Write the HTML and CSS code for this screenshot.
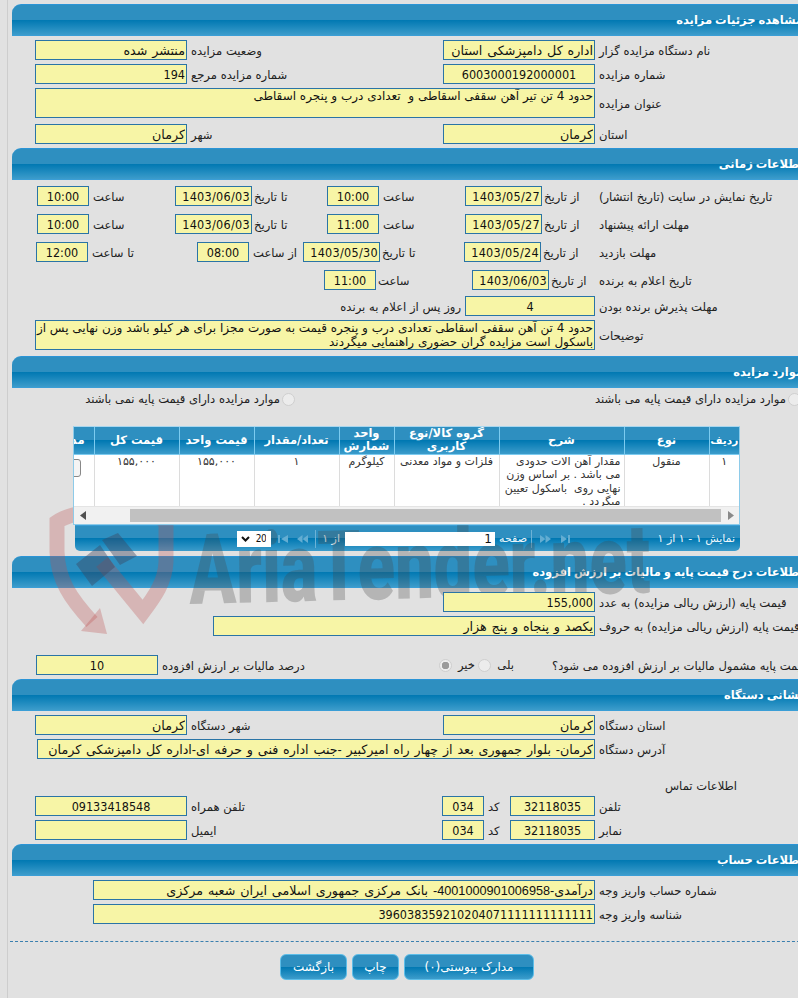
FILE: index.html
```html
<!DOCTYPE html>
<html lang="fa" dir="rtl">
<head>
<meta charset="utf-8">
<title>مشاهده جزئیات مزایده</title>
<link rel="stylesheet" href="styles.css">
</head>
<body>
<div class="sheet">
  <div class="rail">
    <div class="main">

      <section class="sec">
        <h2 class="bar">مشاهده جزئیات مزایده</h2>
        <div class="body b1">
          <div class="row"><span class="l w215">نام دستگاه مزایده گزار</span><input class="f w152" readonly value="اداره کل دامپزشکی استان"><span class="l w256">وضعیت مزایده</span><input class="f w152" readonly value="منتشر شده"></div>
          <div class="row"><span class="l w215">شماره مزایده</span><input class="f n w152 c" readonly value="6003000192000001"><span class="l w256">شماره مزایده مرجع</span><input class="f n w152" readonly value="194"></div>
          <div class="row mid"><span class="l w215">عنوان مزایده</span><textarea class="f ta w560" readonly>حدود 4 تن تیر آهن سقفی اسقاطی و  تعدادی درب و پنجره اسقاطی</textarea></div>
          <div class="row mt2"><span class="l w215">استان</span><input class="f w152" readonly value="کرمان"><span class="l w256">شهر</span><input class="f w152" readonly value="کرمان"></div>
        </div>
      </section>

      <section class="sec">
        <h2 class="bar">اطلاعات زمانی</h2>
        <div class="body b2">
          <div class="row"><span class="l z w211">تاریخ نمایش در سایت (تاریخ انتشار)</span><span class="l t w57">از تاریخ</span><input class="f n w77" readonly value="1403/05/27"><span class="l w86">ساعت</span><input class="f n w52 c" readonly value="10:00"><span class="l t w75">تا تاریخ</span><input class="f n w77" readonly value="1403/06/03"><span class="l w86">ساعت</span><input class="f n w52 c" readonly value="10:00"></div>
          <div class="row"><span class="l z w211">مهلت ارائه پیشنهاد</span><span class="l t w57">از تاریخ</span><input class="f n w77" readonly value="1403/05/27"><span class="l w86">ساعت</span><input class="f n w52 c" readonly value="11:00"><span class="l t w75">تا تاریخ</span><input class="f n w77" readonly value="1403/06/03"><span class="l w86">ساعت</span><input class="f n w52 c" readonly value="10:00"></div>
          <div class="row"><span class="l z w211">مهلت بازدید</span><span class="l t w58">از تاریخ</span><input class="f n w77" readonly value="1403/05/24"><span class="l t w84">تا تاریخ</span><input class="f n w77" readonly value="1403/05/30"><span class="l w54">از ساعت</span><input class="f n w52 c" readonly value="08:00"><span class="l w109">تا ساعت</span><input class="f n w52 c" readonly value="12:00"></div>
          <div class="row"><span class="l z w211">تاریخ اعلام به برنده</span><span class="l t w50">از تاریخ</span><input class="f n w77" readonly value="1403/06/03"><span class="l t w96">ساعت</span><input class="f n w52 c" readonly value="11:00"></div>
          <div class="row less2"><span class="l w215">مهلت پذیرش برنده بودن</span><input class="f n w130 c" readonly value="4"><span class="l wauto">روز پس از اعلام به برنده</span></div>
          <div class="row mid less4"><span class="l w215">توضیحات</span><textarea class="f ta tall w560" readonly wrap="off">حدود 4 تن آهن سقفی اسقاطی تعدادی درب و پنجره قیمت به صورت مجزا برای هر کیلو باشد وزن نهایی پس از
باسکول است مزایده گران حضوری راهنمایی میگردند</textarea></div>
        </div>
      </section>

      <section class="sec">
        <h2 class="bar">موارد مزایده</h2>
        <div class="radios">
          <label class="rad rad1"><input class="dot" type="radio" name="base" disabled><span>موارد مزایده دارای قیمت پایه می باشند</span></label>
          <label class="rad"><input class="dot" type="radio" name="base" disabled><span>موارد مزایده دارای قیمت پایه نمی باشند</span></label>
        </div>
        <div class="grid">
          <div class="grid-clip">
            <table class="tbl">
              <colgroup><col class="c1"><col class="c2"><col class="c3"><col class="c4"><col class="c5"><col class="c6"><col class="c7"><col class="c8"><col class="c9"></colgroup>
              <thead>
                <tr><th>ردیف</th><th>نوع</th><th>شرح</th><th>گروه کالا/نوع کاربری</th><th>واحد شمارش</th><th>تعداد/مقدار</th><th>قیمت واحد</th><th>قیمت کل</th><th>مدارک</th></tr>
              </thead>
              <tbody>
                <tr><td>۱</td><td>منقول</td><td class="desc">مقدار آهن الات حدودی<br>می باشد . بر اساس وزن<br>نهایی روی&nbsp; باسکول تعیین<br>میگردد .</td><td>فلزات و مواد معدنی</td><td>کیلوگرم</td><td>۱</td><td>۱۵۵,۰۰۰</td><td>۱۵۵,۰۰۰</td><td class="btn-cell"><button class="mini" type="button">جزئیات</button></td></tr>
              </tbody>
            </table>
          </div>
          <div class="scroll">
            <svg class="arrow" width="6" height="9" viewBox="0 0 6 9"><path d="M0 0l6 4.500L0 9z" fill="#8a8a8a"/></svg>
            <span class="thumb"></span>
            <svg class="arrow far" width="6" height="9" viewBox="0 0 6 9"><path d="M6 0L0 4.500 6 9z" fill="#505050"/></svg>
          </div>
        </div>
        <div class="pager">
          <span class="pg-info">نمایش ۱ - ۱ از ۱</span>
          <svg class="ico i1" width="9" height="8" viewBox="0 0 9 8"><path d="M0 0l6 4-6 4zM7 0h2v8H7z"/></svg>
          <svg class="ico i2" width="11" height="8" viewBox="0 0 11 8"><path d="M0 0l5.500 4L0 8zM5.500 0L11 4 5.500 8z"/></svg>
          <span class="sep s1"></span>
          <span class="pg-t1">صفحه</span>
          <input class="pg-in" value="1" readonly>
          <span class="pg-t2">از ۱</span>
          <span class="sep s2"></span>
          <svg class="ico i3" width="11" height="8" viewBox="0 0 11 8"><path d="M11 0L5.500 4 11 8zM5.500 0L0 4 5.500 8z"/></svg>
          <svg class="ico i4" width="10" height="8" viewBox="0 0 10 8"><path d="M10 0L3 4l7 4zM0 0h2v8H0z"/></svg>
          <span class="sel-wrap">
            <select class="pg-sel"><option>20</option></select>
            <svg class="chev" width="9" height="6" viewBox="0 0 9 6"><path d="M1 1l3.500 3.500L8 1" fill="none" stroke="#111" stroke-width="2"/></svg>
          </span>
        </div>
      </section>

      <section class="sec s4">
        <h2 class="bar">اطلاعات درج قیمت پایه و مالیات بر ارزش افزوده</h2>
        <div class="body b1">
          <div class="row"><span class="l w215">قیمت پایه (ارزش ریالی مزایده) به عدد</span><input class="f n w152" readonly value="155,000"></div>
          <div class="row"><span class="l w215">قیمت پایه (ارزش ریالی مزایده) به حروف</span><input class="f w382" readonly value="یکصد و پنجاه و پنج هزار"></div>
          <div class="row vat">
            <span class="l w262">قیمت پایه مشمول مالیات بر ارزش افزوده می شود؟</span>
            <label class="rad yes"><span>بلی</span><input class="dot" type="radio" name="vat" disabled></label>
            <label class="rad no"><span>خیر</span><input class="dot" type="radio" name="vat" disabled checked></label>
            <span class="l vat-l">درصد مالیات بر ارزش افزوده</span>
            <input class="f n w122 c" readonly value="10">
          </div>
        </div>
      </section>

      <section class="sec">
        <h2 class="bar">نشانی دستگاه</h2>
        <div class="body b1">
          <div class="row"><span class="l w215">استان دستگاه</span><input class="f w152" readonly value="کرمان"><span class="l w256">شهر دستگاه</span><input class="f w152" readonly value="کرمان"></div>
          <div class="row"><span class="l w215">آدرس دستگاه</span><input class="f w558" readonly value="کرمان- بلوار جمهوری بعد از چهار راه امیرکبیر -جنب اداره فنی و حرفه ای-اداره کل دامپزشکی کرمان"></div>
          <div class="contact">اطلاعات تماس</div>
          <div class="row nogap"><span class="l w215">تلفن</span><input class="f n w85 c" readonly value="32118035"><span class="l w26">کد</span><input class="f n w42 c" readonly value="034"><span class="l w255">تلفن همراه</span><input class="f n w152 c" readonly value="09133418548"></div>
          <div class="row"><span class="l w215">نمابر</span><input class="f n w85 c" readonly value="32118035"><span class="l w26">کد</span><input class="f n w42 c" readonly value="034"><span class="l w255">ایمیل</span><input class="f w152" readonly value=""></div>
        </div>
      </section>

      <section class="sec">
        <h2 class="bar">اطلاعات حساب</h2>
        <div class="body b1 last">
          <div class="row"><span class="l w215">شماره حساب واریز وجه</span><input class="f w502" readonly value="درآمدی-4001000901006958- بانک مرکزی جمهوری اسلامی ایران شعبه مرکزی"></div>
          <div class="row"><span class="l w215">شناسه واریز وجه</span><input class="f n w502" readonly value="396038359210204071111111111111"></div>
        </div>
      </section>

      <div class="dash"></div>
      <div class="actions">
        <button class="act a1" type="button">مدارک پیوستی(۰)</button>
        <button class="act a2" type="button">چاپ</button>
        <button class="act a3" type="button">بازگشت</button>
      </div>

    </div>
  </div>

  <div class="mark" aria-hidden="true">
    <svg class="mark-svg" width="140" height="150" viewBox="0 0 140 150">
      <path class="sh" d="M52 122 C30 98 18 80 17 52 L17 22 C40 6 105 6 126 22 L126 62 C125 82 115 96 103 112 L62 62"/>
      <path class="sh-f" d="M41 131 L67 134 L60 108 Z"/>
      <path class="gv" d="M36 64 L60 45 L75 67 L52 86 Z M62 40 L78 33 L97 56 L80 65 Z"/>
    </svg>
    <span class="mark-t">AriaTender.net</span>
  </div>
</div>
</body>
</html>
```

FILE: styles.css
```css
* { box-sizing: border-box; }
html, body { margin: 0; padding: 0; background: #e1e1e1; }
body { font: 11.600px "DejaVu Sans", sans-serif; color: #222; }

.sheet { position: relative; width: 798px; height: 998px; overflow: hidden; direction: ltr; background: #e1e1e1; }
.rail { margin-left: 7px; padding-left: 4px; border-left: 1px solid #cdcdcd; height: 998px; }
.main { width: 798px; padding-top: 4px; direction: rtl; }

.bar {
  height: 32px; margin: 0; padding: 0 7px 0 0;
  border-top: 1px solid #2b94d6;
  border-bottom: 1px solid #3a9ed6;
  border-top-left-radius: 9px;
  background: linear-gradient(#2e8fc0 0, #2e8fc0 50%, #0078b2 50%, #3c9ccb 100%);
  color: #fff; font-size: 11.500px; font-weight: bold; line-height: 30px; white-space: nowrap; word-spacing: -1px;
}

.body { display: flex; flex-direction: column; gap: 4px; }
.b1 { padding: 4px 0; }
.b2 { padding: 6px 0; gap: 8px; }
.last { padding-bottom: 0; }
.row { display: flex; height: 20px; flex: none; align-items: center; }
.row.mid { height: auto; }
.mt2 { margin-top: 2px; }
.less2 { margin-top: -2px; }
.less4 { margin-top: -4px; }
.nogap { margin-top: 0; }

.l { flex: none; height: 20px; padding-left: 4px; text-align: left; white-space: nowrap; line-height: 22px; }
.l.t { padding-left: 2px; }
.l.z { padding-left: 0; }
.wauto { padding-right: 4px; }

.f {
  position: relative; z-index: 2;
  flex: none; display: block; height: 20px; margin: 0; padding: 0 1px;
  border: 1px solid #2a74a6; border-radius: 0; background: #f7f5a6; color: #111;
  font: 12.700px "Liberation Sans", "DejaVu Sans", sans-serif; word-spacing: 1.300px; text-align: right; direction: rtl; outline: none;
}
.n { font-family: "DejaVu Sans Condensed", "DejaVu Sans", sans-serif; font-size: 12.500px; font-stretch: condensed; word-spacing: 0; }
.w77 { letter-spacing: 0.300px; }
.c { text-align: center; }
.ta { resize: none; overflow: hidden; font: 12px/14px "DejaVu Sans", sans-serif; word-spacing: 0; height: 30px; padding: 0 1px; }
.tall { white-space: pre; }

.w26 { width: 26px; } .w42 { width: 42px; } .w50 { width: 50px; } .w52 { width: 52px; }
.w54 { width: 54px; } .w57 { width: 57px; } .w58 { width: 58px; } .w75 { width: 75px; }
.w77 { width: 77px; } .w84 { width: 84px; } .w85 { width: 85px; } .w86 { width: 86px; }
.w96 { width: 96px; } .w109 { width: 109px; } .w122 { width: 122px; } .w130 { width: 130px; }
.w152 { width: 152px; } .w211 { width: 211px; } .w215 { width: 215px; } .w255 { width: 255px; }
.w256 { width: 256px; } .w262 { width: 262px; } .w382 { width: 382px; } .w502 { width: 502px; }
.w558 { width: 558px; } .w560 { width: 560px; }

.radios { display: flex; height: 14px; margin-top: 4px; padding-right: 9px; }
.rad { display: flex; align-items: center; gap: 2px; white-space: nowrap; line-height: 14px; }
.rad1 { width: 506px; }
.dot {
  appearance: none; -webkit-appearance: none; flex: none; width: 13px; height: 13px; margin: 0;
  border: 1px solid #cfcfcf; border-radius: 50%; background: #ececec;
}
.dot:checked { background: radial-gradient(circle, #9a9a9a 0, #9a9a9a 3.500px, #ececec 4px); }

.grid { position: relative; z-index: 2; width: 667px; margin: 20px 70px 0 0; border: 1px solid #8ecbe9; border-top-color: #a9d6ee; background: #f1f1f1; }
.grid-clip { overflow: hidden; height: 79px; background: #fff; }
.tbl { border-collapse: collapse; table-layout: fixed; width: 700px; background: #fff; }
.c1 { width: 30px; } .c2 { width: 85px; } .c3 { width: 125px; } .c4 { width: 105px; }
.c5 { width: 55px; } .c6 { width: 85px; } .c7 { width: 75px; } .c8 { width: 85px; } .c9 { width: 55px; }
.tbl th {
  height: 27px; padding: 0; border-right: 1px solid #7ccbf0; border-left: 1px solid #7ccbf0;
  border-bottom: 1px solid #7ccbf0;
  background: linear-gradient(#2e8fc0 0, #2e8fc0 50%, #0078b2 50%, #3c9ccb 100%);
  color: #fff; font-size: 11.500px; font-weight: bold; line-height: 13px; text-align: center; overflow: hidden; white-space: normal;
}
.tbl th:first-child { border-right: none; font-size: 10.500px; }
.tbl td {
  height: 52px; padding: 0 3px; border: 1px solid #dcdcdc; border-top: none;
  vertical-align: top; text-align: center; font-size: 11px; line-height: 13.600px; color: #333; overflow: hidden;
}
.tbl td:first-child { border-right: none; }
.tbl td.desc { text-align: right; padding: 0 3px 0 1px; white-space: nowrap; }
.tbl td.btn-cell { padding: 4px 13px 0 0; text-align: right; }
.mini { width: 50px; height: 18px; padding: 0; border: 1px solid #888; border-radius: 3px; background: #f4f4f4; font: 11px "DejaVu Sans", sans-serif; }

.scroll { display: flex; align-items: center; height: 18px; padding: 0 5px 0 6px; background: #f1f1f1; direction: rtl; border-top: 1px solid #e4e4e4; }
.thumb { flex: none; width: 591px; height: 13px; margin-right: 7px; background: #c1c1c1; }
.arrow { flex: none; }
.far { margin-right: auto; }

.pager {
  display: flex; align-items: center; width: 665px; height: 26px; margin: 0 70px 0 0; padding-right: 5px;
  border-bottom-left-radius: 5px; border-bottom-right-radius: 5px;
  background: linear-gradient(#2e8fc0 0, #2e8fc0 50%, #0078b2 50%, #3c9ccb 100%);
  border-top: 1px solid #3a9ed6;
  color: #eef7fc; font-size: 11px; white-space: nowrap;
}
.pg-info { flex: none; width: 165px; }
.ico { flex: none; fill: #63add2; }
.i2 { margin-right: 10px; }
.sep { flex: none; width: 1px; height: 18px; background: #6cb2d6; }
.s1 { margin-right: 8px; }
.pg-t1 { margin-right: 4px; flex: none; width: 28px; }
.pg-in { position: relative; z-index: 2; flex: none; width: 150px; height: 14px; margin: 0 4px 0 0; padding: 0 3px; border: none; background: #fff; font: 12px "DejaVu Sans", sans-serif; color: #111; text-align: right; direction: rtl; }
.pg-t2 { flex: none; margin-right: 5px; }
.s2 { margin-right: 6px; }
.i3 { margin-right: 7px; }
.i4 { margin-right: 9px; }
.sel-wrap { position: relative; z-index: 2; flex: none; width: 34px; height: 16px; margin-right: 7px; background: #fff; }
.pg-sel { display: block; appearance: none; -webkit-appearance: none; width: 34px; height: 16px; margin: 0; padding: 0 5px 0 0; border: none; border-radius: 0; background: transparent; font: 10px "DejaVu Sans Condensed", "DejaVu Sans", sans-serif; letter-spacing: -0.500px; color: #111; }
.chev { position: absolute; left: 4px; top: 5px; }

.s4 { margin-top: 5px; }
.vat { margin-top: 15px; }
.yes { flex: none; width: 71px; gap: 6px; padding-right: 34px; }
.no { flex: none; width: 36px; margin-right: 2px; gap: 6px; }
.vat-l { width: 281px; }

.contact { height: 20px; margin-top: 13px; margin-bottom: -4px; padding-right: 73px; line-height: 20px; }

.dash { height: 1px; margin: 17px 0 0 -2px; border-top: 1px dashed #3a7fae; }
.actions { display: flex; gap: 5px; margin-top: 12px; padding-right: 276px; }
.act {
  flex: none; height: 26px; padding: 0; border: 1px solid #5cbde8; border-radius: 6px;
  background: linear-gradient(#2e8fc0 0, #2e8fc0 50%, #0078b2 50%, #3c9ccb 100%);
  color: #fff; font: 12px "DejaVu Sans", sans-serif; cursor: pointer;
}
.a1 { width: 130px; } .a2 { width: 47px; } .a3 { width: 67px; }

.mark { position: absolute; z-index: 1; left: 40px; top: 500px; width: 620px; height: 150px; pointer-events: none; }
.mark-svg { position: absolute; left: 0; top: 0; }
.sh { fill: none; stroke: rgba(190, 80, 80, 0.3); stroke-width: 15px; }
.sh-f { fill: rgba(190, 80, 80, 0.3); }
.gv { fill: rgba(60, 70, 95, 0.42); }
.mark-t {
  position: absolute; left: 150px; top: 16px; transform-origin: left bottom; transform: scaleX(0.7) rotate(-1deg);
  font: 900 98px/110px Roboto, sans-serif; color: rgba(70, 70, 70, 0.28); white-space: nowrap; direction: ltr;
}
```
